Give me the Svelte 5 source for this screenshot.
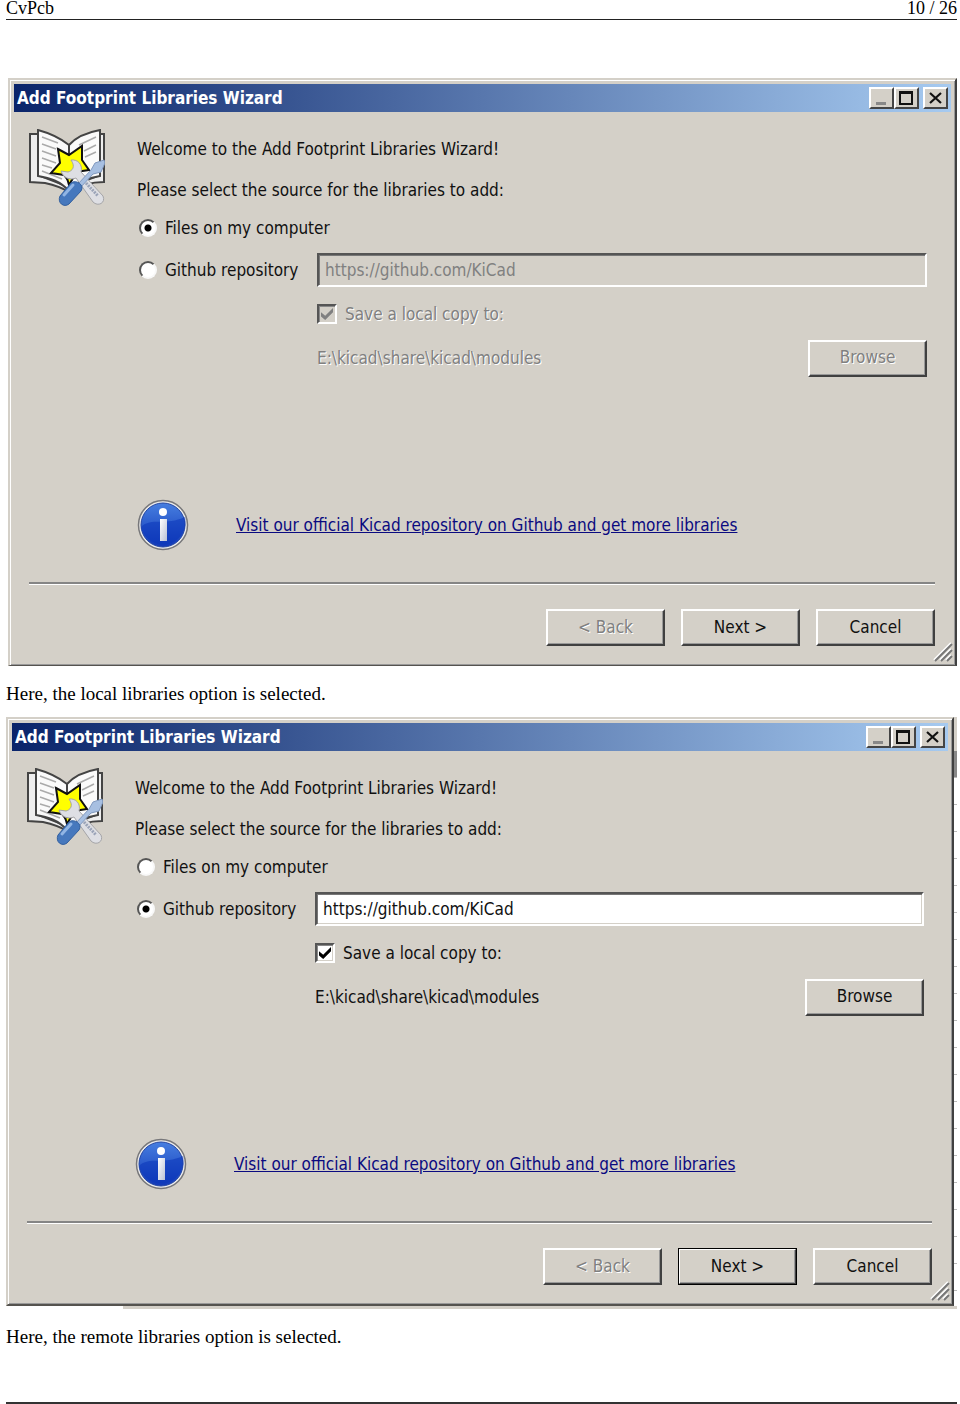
<script>
  let localSource = $state('files');
  let remoteSource = $state('github');
</script>

{#snippet wizard(id, remote, source, setSource)}
  <section class="window" aria-label="Add Footprint Libraries Wizard">
    <header class="titlebar">
      <h2>Add Footprint Libraries Wizard</h2>
      <div class="controls">
        <button aria-label="Minimize"><svg viewBox="0 0 20 18"><path d="M5 13h10v3H5z" fill="#888" /></svg></button>
        <button aria-label="Maximize"><svg viewBox="0 0 20 18"><path d="M4 3v12h12V3" fill="none" stroke="#111" stroke-width="2" /><path d="M3 3.500h14" stroke="#111" stroke-width="3" /></svg></button>
        <button class="close" aria-label="Close"><svg viewBox="0 0 20 18"><path d="M5 4l11 10M16 4L5 14" stroke="#111" stroke-width="2.200" /></svg></button>
      </div>
    </header>

    <div class="main">
      <svg class="book" viewBox="0 0 76 78" aria-hidden="true">
        <path d="M1 5h8v41l31 12v5c-8-5-15-7-24-9L1 53z" fill="#eee" stroke="#444" stroke-width="2" />
        <path d="M71 5h4v48c-13 0-24 3-35 10v-5l31-12z" fill="#eee" stroke="#444" stroke-width="2" />
        <path d="M9 1c11 3 21 7 31 15v46C31 52 21 49 9 47z" fill="#fafafa" stroke="#444" stroke-width="2" />
        <path d="M40 16C48 7 60 3 71 1v46c-13 2-23 6-31 15z" fill="#fafafa" stroke="#444" stroke-width="2" />
        <path d="M13 8l16 6M13 15l14 5M13 22l14 5M13 29l14 5M13 36l10 3M13 42l20 8M50 16l17-8M55 22l12-6M56 28l11-5" stroke="#aaa" stroke-width="1.500" />
        <path d="M29 20l11 6 13-9v14l7 10-13 2-6 11-6-8-13-2 9-10z" fill="#ff0" stroke="#111" stroke-width="2" />
        <path d="M38 49h6l-4 7z" fill="#ff0" stroke="#111" stroke-width="2" />
        <path d="M42 31c7-1 12 5 10 12l22 24c3 7-5 11-10 6L47 49c-7 3-13-1-15-7l7 1c4-1 8-5 3-12z" fill="#dedfe4" stroke="#a5a5a8" />
        <path d="M57 54l12 13" stroke="#9ba4b8" stroke-width="3" stroke-dasharray="2 1" />
        <path d="M49 55l13-14 4-7 9-3 1 3-4 9-8 2-13 14z" fill="#a7bfe1" stroke="#8199bf" />
        <path d="M31 67l11-13c5-4 14 2 10 8L40 75c-5 4-12-1-9-8z" fill="#4678bd" stroke="#315f9f" />
        <path d="M35 66l9-10" stroke="#91b5e4" stroke-width="3" stroke-linecap="round" />
      </svg>

      <div class="form">
        <p>Welcome to the Add Footprint Libraries Wizard!</p>
        <p>Please select the source for the libraries to add:</p>
        <label class="choice">
          <input type="radio" name="{id}-source" value="files" checked={source === 'files'} onchange={() => setSource('files')} />
          Files on my computer
        </label>
        <div class="repository">
          <label class="choice">
            <input type="radio" name="{id}-source" value="github" checked={source === 'github'} onchange={() => setSource('github')} />
            Github repository
          </label>
          <input class="url" type="text" aria-label="Repository URL" value="https://github.com/KiCad" disabled={source !== 'github'} />
        </div>
        <label class="copy" class:disabled={source !== 'github'}>
          <input type="checkbox" checked disabled={source !== 'github'} />
          Save a local copy to:
        </label>
        <div class="path" class:disabled={source !== 'github'}>
          <span>E:\kicad\share\kicad\modules</span>
          <button class="push" disabled={source !== 'github'}>Browse</button>
        </div>
      </div>
    </div>

    <div class="info">
      <svg viewBox="0 0 52 52" aria-hidden="true">
        <defs>
          <linearGradient id="{id}-blue" x2="0" y2="1"><stop stop-color="#467ee0" /><stop offset="1" stop-color="#1239b8" /></linearGradient>
          <linearGradient id="{id}-stem" x2="1" y2="1"><stop stop-color="#fff" /><stop offset="1" stop-color="#b9c1d5" /></linearGradient>
        </defs>
        <circle cx="26" cy="26" r="24.500" fill="#eee" stroke="#77777a" stroke-width="1.500" />
        <circle cx="26" cy="26" r="22" fill="url(#{id}-blue)" stroke="#2446a3" />
        <path d="M4 28C14 18 29 27 48 18A22 22 0 0 1 4 28z" fill="#0934b9" opacity=".55" />
        <circle cx="26" cy="13" r="4" fill="#fff" />
        <path d="M23 20h7v22h-7z" fill="url(#{id}-stem)" />
      </svg>
      <a href="https://github.com/KiCad">Visit our official Kicad repository on Github and get more libraries</a>
    </div>

    <hr />
    <footer class="actions">
      <button class="push" disabled>&lt; Back</button>
      <button class="push" class:default={remote}>Next &gt;</button>
      <button class="push">Cancel</button>
    </footer>
    <svg class="grip" viewBox="0 0 20 20" aria-hidden="true">
      <path d="M1 18L18 1M7 18L18 7M13 18l5-5" stroke="#fff" stroke-width="2" />
      <path d="M2 19L19 2M8 19L19 8M14 19l5-5" stroke="#777" stroke-width="2" />
    </svg>
  </section>
{/snippet}

<div class="page">
  <header class="running"><span>CvPcb</span><span>10 / 26</span></header>
  <main>
    <div class="figure first">
      {@render wizard('local', false, localSource, (v) => (localSource = v))}
    </div>
    <p class="caption">Here, the local libraries option is selected.</p>
    <div class="figure second">
      {@render wizard('remote', true, remoteSource, (v) => (remoteSource = v))}
    </div>
    <p class="caption">Here, the remote libraries option is selected.</p>
  </main>
  <div class="rule"></div>
</div>

<style>
  :global(body) { margin: 0; background: #fff; }
  .page, .page * { box-sizing: border-box; }
  .page {
    min-height: 100vh;
    padding: 0 3px 0 6px;
    display: flex;
    flex-direction: column;
    font: 18px/24px "Liberation Serif", serif;
    color: #000;
  }
  .running {
    display: flex;
    justify-content: space-between;
    height: 20px;
    line-height: 16px;
    border-bottom: 1px solid #222;
  }
  main { flex: 1; padding-top: 58px; }
  p, h2 { margin: 0; }
  .caption { padding: 16px 0 11px; font-size: 19px; }
  .rule { border-top: 2px solid #333; }
  .first { padding-left: 2px; }
  .second {
    padding: 0 3px 3px 0;
    background:
      linear-gradient(#d4d0c8, #d4d0c8) 117px 100% / 100% 3px no-repeat,
      linear-gradient(#d4d0c8 34px, #888 34px 60px, transparent 60px) 100% 0 / 3px 100% no-repeat,
      repeating-linear-gradient(#fff 0 26px, #bbb 26px 27px) 100% 7px / 3px 100% no-repeat;
  }
  .window {
    position: relative;
    padding: 4px 4px 19px;
    background: #d4d0c8;
    border: 2px solid;
    border-color: #d4d0c8 #404040 #55534f #d4d0c8;
    box-shadow: inset 1px 1px #fff, inset -1px -1px #999;
    font: 17px/24px "DejaVu Sans Condensed", "DejaVu Sans", sans-serif;
    color: #111;
  }
  .first .window { border-bottom-width: 1px; }
  .titlebar {
    display: flex;
    align-items: center;
    justify-content: space-between;
    height: 28px;
    padding: 0 3px;
    background: linear-gradient(90deg, #0a246a, #a6caf0);
    color: #fff;
  }
  h2 { font-size: 17px; line-height: 28px; font-weight: 700; }
  .controls { display: flex; }
  .controls button {
    width: 25px;
    height: 22px;
    padding: 0;
    border: 2px solid;
    border-color: #fff #444 #444 #fff;
    background: #d4d0c8;
  }
  .controls .close { margin-left: 4px; }
  .controls svg { display: block; width: 20px; height: 18px; }
  .main {
    display: grid;
    grid-template-columns: 76px 1fr;
    gap: 32px;
    padding: 16px 24px 0 15px;
  }
  .book { width: 76px; height: 78px; margin-top: 1px; }
  .form {
    display: grid;
    grid-template-rows: 42px 40px 36px 48px 40px 48px;
    align-items: center;
  }
  .choice, .copy { display: flex; align-items: center; gap: 8px; }
  .choice { padding-left: 2px; }
  .repository { display: grid; grid-template-columns: 180px 1fr; align-items: center; }
  input { margin: 0; appearance: none; border-radius: 0; }
  input[type="radio"] {
    width: 18px;
    height: 18px;
    border: 2px solid;
    border-color: #555 #f8f8f8 #f8f8f8 #555;
    border-radius: 50%;
    background: #fff;
  }
  input[type="radio"]:checked { background: radial-gradient(circle, #000 3px, #fff 4px); }
  .url {
    width: 100%;
    height: 34px;
    padding: 0 6px;
    border: 2px solid;
    border-color: #555 #fff #fff #555;
    outline: 0;
    background: #fff;
    box-shadow: inset 1px 1px #777, inset -1px -1px #d4d0c8;
    font: inherit;
    color: #111;
  }
  .url:disabled { background: #d4d0c8; color: #808080; }
  .copy, .path { padding-left: 180px; }
  input[type="checkbox"] {
    width: 20px;
    height: 20px;
    border: 2px solid;
    border-color: #555 #fff #fff #555;
    background: #fff;
    box-shadow: inset 1px 1px #888, inset -1px -1px #d4d0c8;
  }
  input[type="checkbox"]:disabled { background: #d4d0c8; }
  input[type="checkbox"]:checked::before {
    content: "";
    display: block;
    width: 12px;
    height: 12px;
    margin: 2px;
    background: #000;
    clip-path: polygon(0 35%, 35% 65%, 100% 0, 100% 35%, 35% 100%, 0 70%);
  }
  input[type="checkbox"]:disabled::before { background: #808080; }
  .path { display: flex; justify-content: space-between; align-items: center; }
  .disabled { color: #808080; text-shadow: 1px 1px #fff; }
  .push {
    width: 119px;
    height: 37px;
    padding: 0 0 2px;
    border: 2px solid;
    border-color: #fff #404040 #404040 #fff;
    background: #d4d0c8;
    box-shadow: inset -1px -1px #999;
    font: inherit;
    color: #111;
  }
  .push:disabled { color: #808080; text-shadow: 1px 1px #fff; }
  .default { outline: 1px solid #000; outline-offset: -1px; }
  .info {
    display: flex;
    align-items: center;
    gap: 47px;
    padding: 117px 0 31px 123px;
  }
  .info svg { width: 52px; height: 52px; flex: none; }
  a { color: #0a0a80; text-decoration: underline; }
  hr {
    margin: 0 16px 24px 15px;
    border: 0;
    border-top: 2px solid #858585;
    border-bottom: 1px solid #fff;
  }
  .actions { display: flex; justify-content: flex-end; gap: 16px; padding-right: 16px; }
  .grip { position: absolute; right: 2px; bottom: 3px; width: 20px; height: 20px; }
</style>
